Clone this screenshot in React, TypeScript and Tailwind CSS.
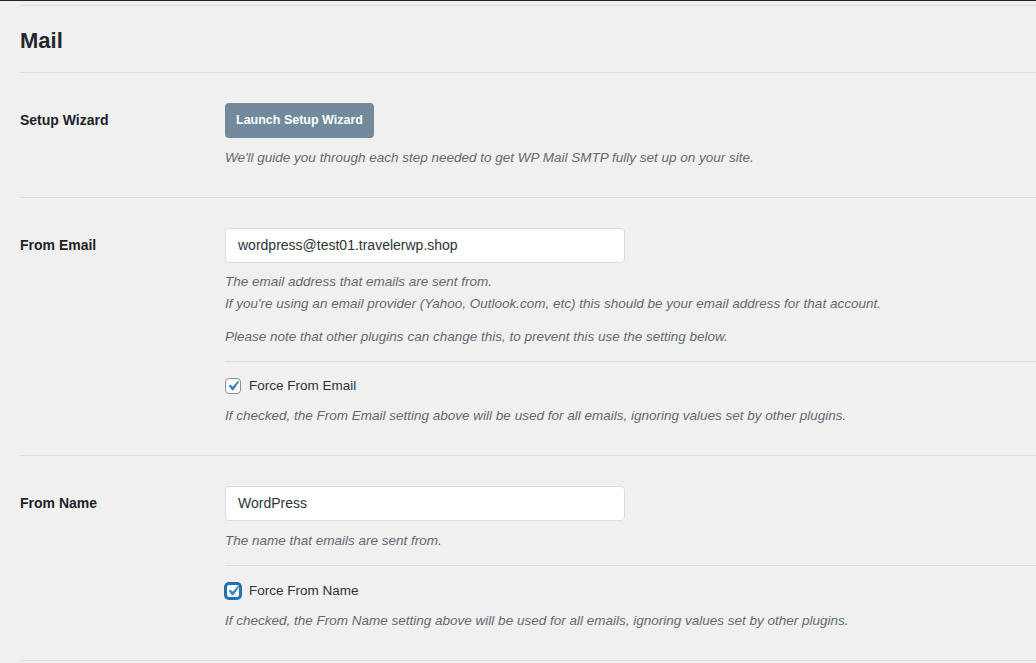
import React from "react"

function Checkbox({ focused }: { focused?: boolean }) {
  return (
    <span
      className={
        "flex h-4 w-4 items-center justify-center rounded-[4px] bg-white " +
        (focused
          ? "border-2 border-[#2271b1] shadow-[0_0_0_1px_#2271b1]"
          : "border border-[#8c8f94]")
      }
    >
      <svg viewBox="0 0 20 20" className="h-[20px] w-[20px] shrink-0">
        <path
          d="M14.83 4.89l1.34.94-5.81 8.38H9.02L5.78 9.67l1.34-1.25 2.57 2.4z"
          fill="#3582c4"
        />
      </svg>
    </span>
  )
}

function Row({
  label,
  children,
  bottom,
}: {
  label: string
  children: React.ReactNode
  bottom: string
}) {
  return (
    <div className={"flex border-b border-[#dcdcde] pt-[30px] " + bottom}>
      <div className="w-[205px] shrink-0 pt-[7px] text-[14px] font-semibold text-[#1d2327]">
        {label}
      </div>
      <div className="min-w-0 flex-1">{children}</div>
    </div>
  )
}

export default function App() {
  return (
    <div
      className="min-h-[663px] w-full overflow-hidden bg-[#f0f0f1] text-[#3c434a]"
      style={{ fontFamily: '"Liberation Sans", Arial, sans-serif' }}
    >
      <div className="h-[1px] bg-[#1d2327]" />
      <div className="pl-5">
        <div className="mt-1 border-t border-[#dcdcde]" />
        <div className="flex h-[67px] items-center border-b border-[#dcdcde]">
          <h2 className="pt-[2px] text-[22px] font-bold text-[#23282c]">Mail</h2>
        </div>

        <Row label="Setup Wizard" bottom="pb-[29px]">
          <button className="h-[35px] w-[149px] rounded-[4px] bg-[#728b9c] text-[12.5px] font-bold text-white">
            Launch Setup Wizard
          </button>
          <p className="mt-[10px] text-[13.5px] italic text-[#646970]">
            We'll guide you through each step needed to get WP Mail SMTP fully set up on your site.
          </p>
        </Row>

        <Row label="From Email" bottom="pb-[29px]">
          <div className="flex h-[35px] w-[400px] items-center rounded-[4px] border border-[#dcdcde] bg-white px-3 text-[14px] text-[#2c3338]">
            wordpress@test01.travelerwp.shop
          </div>
          <p className="mt-[8px] text-[13.5px] leading-[22px] italic text-[#646970]">
            The email address that emails are sent from.
            <br />
            If you're using an email provider (Yahoo, Outlook.com, etc) this should be your email address for that account.
          </p>
          <p className="mt-[12px] text-[13.5px] italic text-[#646970]">
            Please note that other plugins can change this, to prevent this use the setting below.
          </p>
          <div className="mt-[13px] border-t border-[#dcdcde] pt-[14px]">
            <label className="flex items-center gap-2 text-[13.5px] text-[#2c3338]">
              <Checkbox />
              Force From Email
            </label>
            <p className="mt-[10px] text-[13.5px] italic text-[#646970]">
              If checked, the From Email setting above will be used for all emails, ignoring values set by other plugins.
            </p>
          </div>
        </Row>

        <Row label="From Name" bottom="pb-[29px]">
          <div className="flex h-[35px] w-[400px] items-center rounded-[4px] border border-[#dcdcde] bg-white px-3 text-[14px] text-[#2c3338]">
            WordPress
          </div>
          <p className="mt-[10px] text-[13.5px] italic text-[#646970]">The name that emails are sent from.</p>
          <div className="mt-[14px] border-t border-[#dcdcde] pt-[15px]">
            <label className="flex items-center gap-2 text-[13.5px] text-[#2c3338]">
              <Checkbox focused />
              Force From Name
            </label>
            <p className="mt-[9px] text-[13.5px] italic text-[#646970]">
              If checked, the From Name setting above will be used for all emails, ignoring values set by other plugins.
            </p>
          </div>
        </Row>
      </div>
    </div>
  )
}
